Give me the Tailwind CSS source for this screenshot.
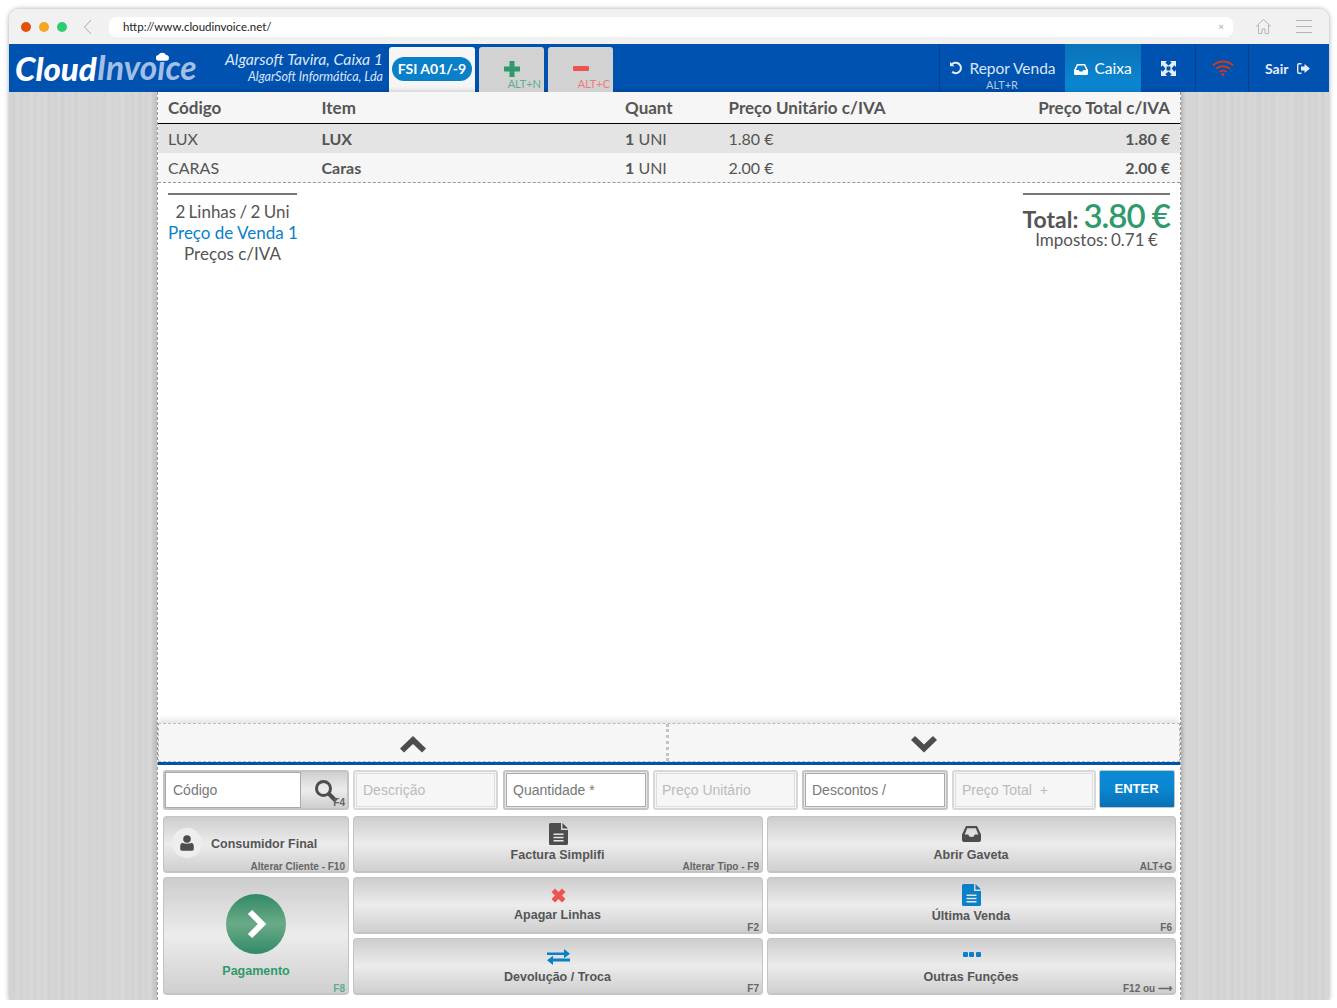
<!DOCTYPE html>
<html lang="pt">
<head>
  <meta charset="UTF-8" />
  <title>CloudInvoice</title>
  <script src="https://cdn.jsdelivr.net/npm/@tailwindcss/browser@4"></script>
</head>
<body class="bg-white overflow-hidden font-['Liberation_Sans',sans-serif]">
  <div class="ml-[9px] mt-[9px] w-[1320px] h-[991px] rounded-t-[10px] overflow-hidden flex flex-col shadow-[0_0_5px_rgba(0,0,0,0.35)]">

    <!-- browser chrome -->
    <div class="h-[35px] shrink-0 bg-[#f1f1f1] flex items-center pl-[12px] pr-[16px]">
      <div class="flex gap-[8px]">
        <span class="w-[10px] h-[10px] rounded-full bg-[#e2520a]"></span>
        <span class="w-[10px] h-[10px] rounded-full bg-[#f5a623]"></span>
        <span class="w-[10px] h-[10px] rounded-full bg-[#2ecc71]"></span>
      </div>
      <svg class="ml-[16px]" width="10" height="16" viewBox="0 0 10 16" fill="none" stroke="#aaa" stroke-width="1"><path d="M8 1L1.500 8L8 15"/></svg>
      <div class="ml-[16px] w-[1124px] h-[20px] rounded-[7px] bg-white flex items-center justify-between pl-[14px] pr-[9px] font-['Lato',sans-serif] text-[11.500px] text-[#222]">
        <span>http://www.cloudinvoice.net/</span>
        <span class="text-[#aaa] text-[10px]">×</span>
      </div>
      <svg class="ml-[22px]" width="17" height="17" viewBox="0 0 17 17" fill="none" stroke="#b5b5b5" stroke-width="1"><path d="M1 8.500L8.500 1.500L16 8.500M3.500 7V15.500H7V11H10V15.500H13.500V7"/></svg>
      <div class="ml-[24px] w-[16px] flex flex-col gap-[5px]">
        <span class="h-px bg-[#b5b5b5]"></span>
        <span class="h-px bg-[#b5b5b5]"></span>
        <span class="h-px bg-[#b5b5b5]"></span>
      </div>
    </div>

    <!-- app header -->
    <div class="h-[48px] shrink-0 bg-[#0052b0] flex text-white">
      <div class="relative w-[196px] pl-[6px] flex items-center font-['Lato',sans-serif] italic font-black text-[33px] leading-none">
        <span>Cloud</span><span class="text-[#a3bfe6] font-bold text-[33.500px]">Invoice</span>
        <svg class="absolute left-[147px] top-[8px]" width="13" height="9" viewBox="0 0 14 9" fill="#fff"><path d="M3 9a3 3 0 0 1-.4-6A4.500 4.500 0 0 1 10.800 3 3 3 0 0 1 11 9z"/></svg>
      </div>
      <div class="w-[178px] pt-[5px] text-right italic font-['Lato',sans-serif] text-[#dbe6f5] leading-none whitespace-nowrap">
        <div class="text-[15.800px] leading-[19px]">Algarsoft Tavira, Caixa 1</div>
        <div class="text-[12.500px] leading-[18px]">AlgarSoft Informática, Lda</div>
      </div>
      <div class="ml-[6px] mt-[3px] w-[86px] h-[45px] bg-[#f6f6f6] rounded-t-[3px] flex items-center justify-center pb-[2px]">
        <span class="w-[80px] h-[24px] rounded-full bg-[#0a80c8] flex items-center justify-center font-['Lato',sans-serif] font-bold text-[14px]">FSI A01/-9</span>
      </div>
      <div class="relative ml-[4px] mt-[3px] w-[65px] h-[45px] bg-[#d2d2d2] rounded-t-[3px] text-[#2e9e6e]">
        <svg class="absolute left-[25px] top-[14px]" width="16" height="16" viewBox="0 0 16 16" fill="#2f9a6b"><path d="M5.500 0h5v5.500H16v5h-5.500V16h-5v-5.500H0v-5h5.500z"/></svg>
        <span class="absolute right-[3px] bottom-[3px] font-['Lato',sans-serif] text-[11px] leading-none text-[#5bb08a]">ALT+N</span>
      </div>
      <div class="relative ml-[4px] mt-[3px] w-[65px] h-[45px] bg-[#d2d2d2] rounded-t-[3px]">
        <span class="absolute left-[25px] top-[19px] w-[16px] h-[5px] rounded-[1px] bg-[#ef5350]"></span>
        <span class="absolute right-[3px] bottom-[3px] font-['Lato',sans-serif] text-[11px] leading-none text-[#ef7b78]">ALT+C</span>
      </div>
      <div class="flex-1"></div>
      <div class="w-[126px] border-l border-[#0a3f84] flex flex-col items-center pt-[14px] font-['Lato',sans-serif] text-[#dbe6f5]">
        <div class="flex items-center gap-[6px] text-[15.500px] leading-[20px]">
          <svg width="14" height="14" viewBox="0 0 14 14" fill="none" stroke="#e6edf7" stroke-width="2"><path d="M3.200 10.800A5.200 5.200 0 1 0 2.500 4"/><path d="M1 .8V5.200H5.400" fill="#e6edf7" stroke="none"/></svg>
          <span>Repor Venda</span>
        </div>
        <div class="text-[11px] leading-[13px] mr-[1px] text-[#b6c9e6]">ALT+R</div>
      </div>
      <div class="w-[76px] pt-[2px] bg-gradient-to-b from-[#0a72b8] to-[#0a8ad6] flex items-center justify-center gap-[6px] font-['Lato',sans-serif] text-[15.500px]">
        <svg width="14" height="11" viewBox="0 0 14 11" fill="#fff"><path d="M3 0h8l3 6v3.500a1.500 1.500 0 0 1-1.500 1.500h-11A1.500 1.500 0 0 1 0 9.500V6zM3.800 1.500L1.900 6H4.800l.8 1.500h2.800l.8-1.500h2.900l-1.900-4.500z" fill-rule="evenodd"/></svg>
        <span>Caixa</span>
      </div>
      <div class="w-[55px] border-r border-[#0a3f84] flex items-center justify-center">
        <svg width="15" height="15" viewBox="0 0 15 15" fill="#e6edf7"><path d="M0 0h6L4.300 1.700 7.500 4.400 10.700 1.700 9 0h6v6L13.300 4.300 10.600 7.500 13.300 10.700 15 9v6H9l1.700-1.700L7.500 10.600 4.300 13.300 6 15H0V9l1.700 1.700L4.400 7.500 1.700 4.300 0 6zM5.600 5.600V9.400H9.400V5.600z" fill-rule="evenodd"/></svg>
      </div>
      <div class="w-[53px] pl-[1px] border-r border-[#0a3f84] flex items-center justify-center">
        <svg width="22" height="16" viewBox="0 0 22 16" fill="none" stroke="#cf3a1e" stroke-width="2"><path d="M1 5.500a14.500 14.500 0 0 1 20 0M4.200 8.800a10 10 0 0 1 13.600 0M7.500 12a5.200 5.200 0 0 1 7 0"/><circle cx="11" cy="14.500" r="1.500" fill="#cf3a1e" stroke="none"/></svg>
      </div>
      <div class="w-[80px] pl-[16px] flex items-center gap-[9px] font-['Lato',sans-serif] font-bold text-[14px] text-[#e6edf7]">
        <span>Sair</span>
        <svg width="13" height="11" viewBox="0 0 13 11" fill="#e6edf7"><path d="M4.500 0v1.400H2a.6.6 0 0 0-.6.6v7c0 .3.300.6.6.6h2.500V11H2A2 2 0 0 1 0 9V2a2 2 0 0 1 2-2z"/><path d="M7.500 1L13 5.500 7.500 10V7.500H4v-4h3.500z"/></svg>
      </div>
    </div>

    <!-- page over the brushed background -->
    <div class="flex-1 bg-[#d6d6d6] bg-[repeating-linear-gradient(90deg,rgba(255,255,255,0.06)_0px,transparent_2px,rgba(0,0,0,0.015)_5px,transparent_7px),repeating-linear-gradient(90deg,rgba(0,0,0,0.012)_0px,transparent_4px,rgba(255,255,255,0.05)_11px,transparent_13px),repeating-linear-gradient(90deg,rgba(0,0,0,0.01)_0px,transparent_19px,rgba(255,255,255,0.025)_31px,rgba(0,0,0,0.008)_47px,transparent_83px)]">
      <div class="ml-[148px] w-[1024px] h-full bg-white border-x border-dashed border-[#999] flex flex-col shadow-[0_0_6px_rgba(0,0,0,0.25)] text-[#555]">

        <!-- lines table -->
        <div class="font-['Lato',sans-serif]">
          <div class="grid grid-cols-[153.500px_303.500px_103.500px_1fr_auto] items-center h-[32px] px-[10px] bg-[#f6f6f6] border-b border-black font-bold text-[17px]">
            <span>Código</span><span>Item</span><span>Quant</span><span>Preço Unitário c/IVA</span><span>Preço Total c/IVA</span>
          </div>
          <div class="grid grid-cols-[153.500px_303.500px_103.500px_1fr_auto] items-center h-[29px] px-[10px] bg-[#e4e4e4] text-[16px]">
            <span>LUX</span><span class="font-bold">LUX</span><span><b>1</b> UNI</span><span>1.80 €</span><b>1.80 €</b>
          </div>
          <div class="grid grid-cols-[153.500px_303.500px_103.500px_1fr_auto] items-center h-[30px] px-[10px] bg-[#f6f6f6] border-b border-dashed border-[#999] text-[16px]">
            <span>CARAS</span><span class="font-bold">Caras</span><span><b>1</b> UNI</span><span>2.00 €</span><b>2.00 €</b>
          </div>
        </div>

        <!-- totals -->
        <div class="flex-1 flex justify-between items-start px-[10px] pt-[10px] font-['Lato',sans-serif]">
          <div class="w-[129px] border-t-2 border-[#777] pt-[6px] text-center text-[17px] leading-[21px] whitespace-nowrap">
            <div class="[word-spacing:-1px]">2 Linhas / 2 Uni</div>
            <div class="text-[#0a80c8]">Preço de Venda 1</div>
            <div>Preços c/IVA</div>
          </div>
          <div class="w-[147px] border-t-2 border-[#777] pt-[4px] text-center whitespace-nowrap">
            <div class="h-[32px] flex items-baseline justify-end gap-[5px] font-bold text-[23px] leading-[32px]">
              <span>Total:</span><span class="text-[33px] leading-[32px] font-semibold tracking-[-1px] text-[#2f9a6b]">3.80 €</span>
            </div>
            <div class="text-[17px] leading-[17px] [word-spacing:-1px]">Impostos: 0.71 €</div>
          </div>
        </div>

        <!-- scroll arrows -->
        <div class="h-[39px] shrink-0 grid grid-cols-2 bg-[#f6f6f6] border border-dashed border-[#bbb] shadow-[0_-3px_6px_rgba(0,0,0,0.12)]">
          <div class="flex items-center justify-center pt-[4px] border-r-[3px] border-dotted border-[#c4c4c4]">
            <svg width="26" height="17" viewBox="0 0 26 17" fill="#4d4d4d"><path d="M13 0L26 12.500 22 16.500 13 8 4 16.500 0 12.500z"/></svg>
          </div>
          <div class="flex items-center justify-center pt-[4px]">
            <svg width="26" height="17" viewBox="0 0 26 17" fill="#4d4d4d"><path d="M13 16.500L26 4 22 0 13 8.500 4 0 0 4z"/></svg>
          </div>
        </div>
        <div class="h-[3px] shrink-0 bg-[#0052b0]"></div>

        <!-- entry row -->
        <div class="pl-[5px] pr-[5px] pt-[5px] flex gap-[4px] h-[51px] shrink-0 text-[14px]">
          <div class="w-[186px] h-[40px] flex rounded-[3px] border-2 border-[#c4c4c4] bg-gradient-to-b from-[#cfcfcf] via-[#ececec] to-[#cfcfcf]">
            <div class="w-[136px] h-[36px] border border-[#aaa] bg-white text-[#777] flex items-center pl-[7px]">Código</div>
            <div class="relative flex-1">
              <svg class="absolute left-[13px] top-[7px]" width="24" height="24" viewBox="0 0 24 24" fill="none" stroke="#4d4d4d"><circle cx="9.500" cy="9.500" r="7" stroke-width="3"/><path d="M15 15L22 22" stroke-width="4"/></svg>
              <span class="absolute right-[2px] bottom-0 text-[10px] font-bold leading-[10px] text-[#666]">F4</span>
            </div>
          </div>
          <div class="w-[145px] h-[40px] rounded-[3px] border-2 border-[#d8d8d8] bg-[#f6f6f6] p-px"><div class="h-full border border-[#ddd] flex items-center pl-[6px] text-[#bbb]">Descrição</div></div>
          <div class="ml-[1px] w-[146px] h-[40px] rounded-[3px] border-2 border-[#c4c4c4] bg-[#e6e6e6] p-px"><div class="h-full border border-[#aaa] bg-white flex items-center pl-[6px] text-[#777]">Quantidade *</div></div>
          <div class="w-[145px] h-[40px] rounded-[3px] border-2 border-[#d8d8d8] bg-[#f6f6f6] p-px"><div class="h-full border border-[#ddd] flex items-center pl-[5px] text-[#bbb]">Preço Unitário</div></div>
          <div class="w-[146px] h-[40px] rounded-[3px] border-2 border-[#c4c4c4] bg-[#e6e6e6] p-px"><div class="h-full border border-[#aaa] bg-white flex items-center pl-[6px] text-[#777]">Descontos /</div></div>
          <div class="w-[144px] h-[40px] rounded-[3px] border-2 border-[#d8d8d8] bg-[#f6f6f6] p-px"><div class="h-full border border-[#ddd] flex items-center gap-[8px] pl-[6px] text-[#bbb]"><span>Preço Total</span><span>+</span></div></div>
          <div class="-ml-[1px] w-[76px] h-[38px] rounded-[2px] border border-[#c4c4c4] bg-gradient-to-b from-[#0a8ad6] via-[#0a86d0] to-[#0a6fb4] flex items-center justify-center text-white font-bold text-[13px] pr-[1px]">ENTER</div>
        </div>

        <!-- function buttons -->
        <div class="pl-[5px] pr-[4px] grid grid-cols-[186px_410px_409px] grid-rows-[57px_57px_57px] gap-x-[4px] gap-y-[4px] h-[184px] shrink-0 text-[#555] font-bold text-[12.500px]">
          <div class="relative rounded-[4px] border border-[#c4c4c4] border-b-[2px] bg-gradient-to-b from-[#cdcdcd] via-[#ececec] to-[#cfcfcf]">
            <div class="absolute left-[8px] top-[11px] w-[30px] h-[30px] rounded-full bg-[#eeeeee] flex items-center justify-center">
              <svg width="14" height="16" viewBox="0 0 14 16" fill="#4d4d4d"><circle cx="7" cy="4" r="3.800"/><path d="M2.500 7.800C4 9 10 9 11.500 7.800 13 8 13.800 9.500 13.800 12V14a1.800 1.800 0 0 1-1.800 1.800H2A1.800 1.800 0 0 1 .2 14V12C.2 9.500 1 8 2.500 7.800z"/></svg>
            </div>
            <span class="absolute left-[47px] top-[20px] leading-[14px] whitespace-nowrap">Consumidor Final</span>
            <span class="absolute right-[3px] -bottom-[1px] text-[10px] leading-[11px] text-[#666]">Alterar Cliente - F10</span>
          </div>
          <div class="relative rounded-[4px] border border-[#c4c4c4] border-b-[2px] bg-gradient-to-b from-[#cdcdcd] via-[#ececec] to-[#cfcfcf] flex flex-col items-center pt-[6px]">
            <svg width="19" height="22" viewBox="0 0 19 22" fill="#4d4d4d"><path d="M1.500 0H12v7h7v13.500a1.500 1.500 0 0 1-1.500 1.500h-16A1.500 1.500 0 0 1 0 20.500v-19A1.500 1.500 0 0 1 1.500 0zM13.500 0L19 5.500h-5.500zM4.500 10.500v1.500h10v-1.500zM4.500 13.700v1.500h10v-1.500zM4.500 16.900v1.500h10v-1.500z" fill-rule="evenodd"/></svg>
            <span class="mt-[3px] leading-[14px] mr-[1px]">Factura Simplifi</span>
            <span class="absolute right-[3px] -bottom-[1px] text-[10px] leading-[11px] text-[#666]">Alterar Tipo - F9</span>
          </div>
          <div class="relative rounded-[4px] border border-[#c4c4c4] border-b-[2px] bg-gradient-to-b from-[#cdcdcd] via-[#ececec] to-[#cfcfcf] flex flex-col items-center pt-[9px]">
            <svg width="19" height="16" viewBox="0 0 19 16" fill="#4d4d4d"><path d="M4 0h11l4 8.500V14a2 2 0 0 1-2 2H2a2 2 0 0 1-2-2V8.500zM5.200 2.300L2.700 8.500H6.300l1.200 2.300h4l1.200-2.300h3.600l-2.500-6.200z" fill-rule="evenodd"/></svg>
            <span class="mt-[6px] leading-[14px] mr-[1px]">Abrir Gaveta</span>
            <span class="absolute right-[3px] -bottom-[1px] text-[10px] leading-[11px] text-[#666]">ALT+G</span>
          </div>
          <div class="relative row-span-2 rounded-[4px] border border-[#c4c4c4] border-b-[2px] bg-gradient-to-b from-[#cdcdcd] via-[#ececec] to-[#cfcfcf] flex flex-col items-center pt-[16px]">
            <div class="w-[60px] h-[60px] rounded-full bg-gradient-to-b from-[#2f8a66] via-[#6aaa88] to-[#2f8a66] flex items-center justify-center">
              <svg width="20" height="30" viewBox="0 0 20 30"><path d="M4 3L16 15 4 27" fill="none" stroke="#fff" stroke-width="6"/></svg>
            </div>
            <span class="mt-[10px] leading-[14px] text-[#2f9a6b]">Pagamento</span>
            <span class="absolute right-[3px] -bottom-[1px] text-[10px] leading-[11px] text-[#5bb08a]">F8</span>
          </div>
          <div class="relative rounded-[4px] border border-[#c4c4c4] border-b-[2px] bg-gradient-to-b from-[#cdcdcd] via-[#ececec] to-[#cfcfcf] flex flex-col items-center pt-[10px]">
            <svg width="15" height="15" viewBox="0 0 15 15" fill="#ef5350"><path d="M4 .5L7.500 4 11 .5 14.500 4 11 7.500 14.500 11 11 14.500 7.500 11 4 14.500 .5 11 4 7.500 .5 4z"/></svg>
            <span class="mt-[5px] leading-[14px] mr-[1px]">Apagar Linhas</span>
            <span class="absolute right-[3px] -bottom-[1px] text-[10px] leading-[11px] text-[#666]">F2</span>
          </div>
          <div class="relative rounded-[4px] border border-[#c4c4c4] border-b-[2px] bg-gradient-to-b from-[#cdcdcd] via-[#ececec] to-[#cfcfcf] flex flex-col items-center pt-[6px]">
            <svg width="19" height="22" viewBox="0 0 19 22" fill="#0a80c8"><path d="M1.500 0H12v7h7v13.500a1.500 1.500 0 0 1-1.500 1.500h-16A1.500 1.500 0 0 1 0 20.500v-19A1.500 1.500 0 0 1 1.500 0zM13.500 0L19 5.500h-5.500zM4.500 10.500v1.500h10v-1.500zM4.500 13.700v1.500h10v-1.500zM4.500 16.900v1.500h10v-1.500z" fill-rule="evenodd"/></svg>
            <span class="mt-[3px] leading-[14px] mr-[1px]">Última Venda</span>
            <span class="absolute right-[3px] -bottom-[1px] text-[10px] leading-[11px] text-[#666]">F6</span>
          </div>
          <div class="relative rounded-[4px] border border-[#c4c4c4] border-b-[2px] bg-gradient-to-b from-[#cdcdcd] via-[#ececec] to-[#cfcfcf] flex flex-col items-center pt-[10px]">
            <svg width="23" height="16" viewBox="0 0 23 16" fill="#0a80c8"><path d="M0 3.500h17V0l6 4.700-6 4.600V6H0zM23 9.500H6V6.700L0 11.300 6 16v-3.500h17z"/></svg>
            <span class="mt-[5px] leading-[14px] mr-[1px]">Devolução / Troca</span>
            <span class="absolute right-[3px] -bottom-[1px] text-[10px] leading-[11px] text-[#666]">F7</span>
          </div>
          <div class="relative rounded-[4px] border border-[#c4c4c4] border-b-[2px] bg-gradient-to-b from-[#cdcdcd] via-[#ececec] to-[#cfcfcf] flex flex-col items-center pt-[13px]">
            <div class="h-[5px] flex gap-[1.500px]">
              <span class="w-[5px] h-[5px] rounded-[1px] bg-[#0a80c8]"></span>
              <span class="w-[5px] h-[5px] rounded-[1px] bg-[#0a80c8]"></span>
              <span class="w-[5px] h-[5px] rounded-[1px] bg-[#0a80c8]"></span>
            </div>
            <span class="mt-[13px] leading-[14px] mr-[1px]">Outras Funções</span>
            <span class="absolute right-[3px] -bottom-[1px] text-[10px] leading-[11px] text-[#666]">F12 ou ⟶</span>
          </div>
        </div>
      </div>
    </div>
  </div>
</body>
</html>
